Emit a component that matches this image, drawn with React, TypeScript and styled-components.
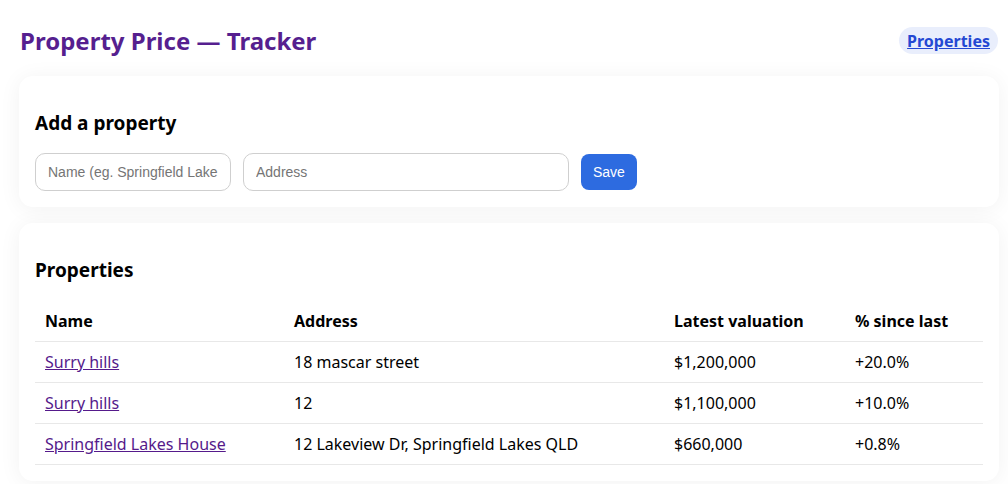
import React from "react";
import styled, { createGlobalStyle } from "styled-components";

const Global = createGlobalStyle`
  html, body { margin: 0; padding: 0; background: #fff; }
  body { font-family: "Noto Sans", "Open Sans", sans-serif; color: #000; }
`;

const Page = styled.div`
  width: 980px;
  padding: 0 0 0 19px;
  box-sizing: content-box;
`;

const Header = styled.header`
  display: flex;
  align-items: center;
  justify-content: space-between;
  height: 76px;
  padding: 5px 0 0 1px;
  box-sizing: border-box;
`;

const Title = styled.h1`
  margin: 0;
  font-size: 24px;
  font-weight: 700;
  color: #561f8f;
`;

const NavPill = styled.a`
  display: inline-flex;
  align-items: center;
  height: 27px;
  padding: 0 8px;
  margin-right: 1px;
  border-radius: 14px;
  background: #e9eefc;
  color: #2448d3;
  font-weight: 700;
  font-size: 16px;
  text-decoration: underline;
`;

const Card = styled.section`
  background: #fff;
  border-radius: 14px;
  box-shadow: 0 2px 22px rgba(0, 0, 0, 0.055);
  padding: 16px;
  margin-bottom: 16px;
`;

const CardTitle = styled.h2`
  margin: 18px 0 17px;
  font-size: 19px;
  font-weight: 700;
  line-height: 26px;
`;

const FormRow = styled.div`
  display: flex;
  align-items: center;
  gap: 12px;
`;

const Input = styled.input<{ $w: number }>`
  width: ${(p) => p.$w}px;
  height: 38px;
  box-sizing: border-box;
  border: 1px solid #cfcfcf;
  border-radius: 10px;
  padding: 0 12px;
  font-family: "Liberation Sans", Arial, sans-serif;
  font-size: 14px;
  outline: none;
  &::placeholder { color: #757575; }
`;

const SaveButton = styled.button`
  height: 36px;
  padding: 0 12px;
  border: none;
  border-radius: 8px;
  background: #2d6be0;
  color: #fff;
  font-family: "Liberation Sans", Arial, sans-serif;
  font-size: 14px;
`;

const Table = styled.table`
  width: 100%;
  border-collapse: collapse;
  font-size: 16px;
`;

const Th = styled.th<{ $w?: number }>`
  text-align: left;
  font-weight: 700;
  padding: 0 10px;
  height: 41px;
  border-bottom: 1px solid #e8e8e8;
  width: ${(p) => (p.$w ? `${p.$w}px` : "auto")};
`;

const Td = styled.td`
  padding: 0 10px;
  height: 40px;
  border-bottom: 1px solid #e8e8e8;
`;

const NameLink = styled.a`
  color: #551a8b;
  text-decoration: underline;
`;

const rows = [
  { name: "Surry hills", address: "18 mascar street", value: "$1,200,000", pct: "+20.0%" },
  { name: "Surry hills", address: "12", value: "$1,100,000", pct: "+10.0%" },
  { name: "Springfield Lakes House", address: "12 Lakeview Dr, Springfield Lakes QLD", value: "$660,000", pct: "+0.8%" },
];

export default function App() {
  return (
    <>
      <Global />
      <Page>
        <Header>
          <Title>Property Price — Tracker</Title>
          <NavPill href="#">Properties</NavPill>
        </Header>
        <Card>
          <CardTitle>Add a property</CardTitle>
          <FormRow>
            <Input $w={196} placeholder="Name (eg. Springfield Lakes House)" />
            <Input $w={326} placeholder="Address" />
            <SaveButton>Save</SaveButton>
          </FormRow>
        </Card>
        <Card>
          <CardTitle>Properties</CardTitle>
          <Table>
            <thead>
              <tr>
                <Th $w={229}>Name</Th>
                <Th $w={360}>Address</Th>
                <Th $w={161}>Latest valuation</Th>
                <Th>% since last</Th>
              </tr>
            </thead>
            <tbody>
              {rows.map((r, i) => (
                <tr key={i}>
                  <Td>
                    <NameLink href="#">{r.name}</NameLink>
                  </Td>
                  <Td>{r.address}</Td>
                  <Td>{r.value}</Td>
                  <Td>{r.pct}</Td>
                </tr>
              ))}
            </tbody>
          </Table>
        </Card>
      </Page>
    </>
  );
}
